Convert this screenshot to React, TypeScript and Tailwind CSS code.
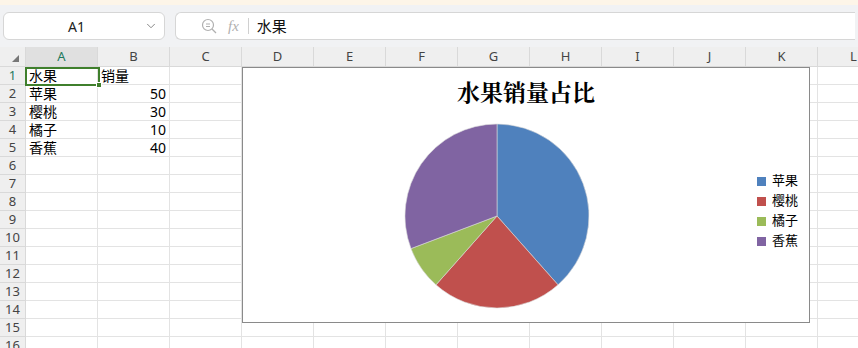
import { ChevronDown } from "lucide-react";

const columns = ["A", "B", "C", "D", "E", "F", "G", "H", "I", "J", "K", "L"];
const rows = Array.from({ length: 16 }, (_, i) => i + 1);

const cells: Record<string, { text: string; right?: boolean }> = {
  A1: { text: "水果" },
  B1: { text: "销量" },
  A2: { text: "苹果" },
  B2: { text: "50", right: true },
  A3: { text: "樱桃" },
  B3: { text: "30", right: true },
  A4: { text: "橘子" },
  B4: { text: "10", right: true },
  A5: { text: "香蕉" },
  B5: { text: "40", right: true },
};

const slices = [
  { name: "苹果", value: 50, color: "#4f81bd" },
  { name: "樱桃", value: 30, color: "#c0504d" },
  { name: "橘子", value: 10, color: "#9bbb59" },
  { name: "香蕉", value: 40, color: "#8064a2" },
];

function PieChart() {
  const total = slices.reduce((sum, s) => sum + s.value, 0);
  const cx = 100;
  const cy = 100;
  const r = 92;
  let angle = 0;
  return (
    <svg width="200" height="200" viewBox="0 0 200 200">
      {slices.map((s) => {
        const start = angle;
        angle += (s.value / total) * Math.PI * 2;
        const x1 = cx + r * Math.sin(start);
        const y1 = cy - r * Math.cos(start);
        const x2 = cx + r * Math.sin(angle);
        const y2 = cy - r * Math.cos(angle);
        const large = angle - start > Math.PI ? 1 : 0;
        return (
          <path
            key={s.name}
            d={`M${cx} ${cy} L${x1} ${y1} A${r} ${r} 0 ${large} 1 ${x2} ${y2} Z`}
            fill={s.color}
            stroke="#d9d9d9"
            strokeWidth="0.6"
          />
        );
      })}
    </svg>
  );
}

export default function App() {
  return (
    <div className="h-[348px] w-[858px] overflow-hidden bg-white font-['Noto_Sans','Noto_Sans_CJK_SC',sans-serif] text-black">
      <div className="h-[5px] bg-[#fdf5e8]" />
      <div className="flex h-[42px] items-start gap-[10px] bg-[#f1f2f4] px-[3px] pt-[7px]">
        <div className="flex h-[28px] w-[162px] items-center justify-between rounded-[6px] border border-[#d6d6d6] bg-white pl-[64px] pr-[6px]">
          <span className="text-[14px] text-[#222]">A1</span>
          <ChevronDown size={14} strokeWidth={1.5} className="text-[#777]" />
        </div>
        <div className="flex h-[28px] flex-1 items-center rounded-l-[6px] border border-r-0 border-[#d6d6d6] bg-white pl-[24px]">
          <svg width="18" height="18" viewBox="0 0 18 18" fill="none" stroke="#b0b0b0" strokeWidth="1.2">
            <circle cx="8" cy="8" r="5.5" />
            <path d="M12 12 L16 16" />
            <path d="M6 7 H10 M6 9.5 H10" />
          </svg>
          <span className="ml-[10px] font-['Liberation_Serif',serif] text-[15px] italic text-[#b0b0b0]">fx</span>
          <div className="ml-[9px] h-[16px] w-px bg-[#d0d0d0]" />
          <span className="ml-[8px] text-[15px] text-[#111]">水果</span>
        </div>
      </div>

      <div className="relative">
        <div className="grid grid-cols-[26px_repeat(12,72px)] grid-rows-[20px_repeat(16,18px)]">
          <div className="relative border-b border-r border-[#d9d9d9] bg-[#efefef]">
            <svg className="absolute bottom-[4px] right-[6px]" width="7" height="7" viewBox="0 0 7 7">
              <path d="M7 0 L7 7 L0 7 Z" fill="#777" />
            </svg>
          </div>
          {columns.map((c) => (
            <div
              key={c}
              className={`flex items-center justify-center border-b border-r border-[#d9d9d9] text-[13px] ${
                c === "A" ? "bg-[#e0e0e0] text-[#1e7a5e]" : "bg-[#efefef] text-[#444]"
              }`}
            >
              {c}
            </div>
          ))}
          {rows.map((r) => (
            <>
              <div
                key={`h${r}`}
                className={`flex items-center justify-center border-b border-r border-[#d9d9d9] bg-[#efefef] text-[13px] ${
                  r === 1 ? "text-[#1e7a5e]" : "text-[#444]"
                }`}
              >
                {r}
              </div>
              {columns.map((c) => {
                const cell = cells[`${c}${r}`];
                return (
                  <div
                    key={`${c}${r}`}
                    className={`flex items-center overflow-hidden border-b border-r border-[#e3e3e3] px-[3px] text-[14px] leading-none ${
                      cell?.right ? "justify-end" : "justify-start"
                    }`}
                  >
                    {cell?.text}
                  </div>
                );
              })}
            </>
          ))}
        </div>

        <div className="absolute left-[25px] top-[20px] h-[19px] w-[75px] border-2 border-[#3f7f2c]">
          <div className="absolute -bottom-[4px] -right-[4px] h-[6px] w-[6px] border border-white bg-[#3f7f2c]" />
        </div>

        <div className="absolute left-[242px] top-[20px] flex h-[256px] w-[568px] flex-col border border-[#8a8a8a] bg-white">
          <div className="mt-[9px] text-center font-['Noto_Serif_CJK_SC','Noto_Sans_CJK_SC',serif] text-[23px] font-bold leading-[30px]">
            水果销量占比
          </div>
          <div className="relative flex-1">
            <div className="absolute left-[154px] top-[9px]">
              <PieChart />
            </div>
            <div className="absolute left-[514px] top-[66px] flex flex-col gap-[4px]">
              {slices.map((s) => (
                <div key={s.name} className="flex h-[16px] items-center gap-[6px] text-[13px]">
                  <span className="h-[9px] w-[9px]" style={{ backgroundColor: s.color }} />
                  <span>{s.name}</span>
                </div>
              ))}
            </div>
          </div>
        </div>
      </div>
    </div>
  );
}
